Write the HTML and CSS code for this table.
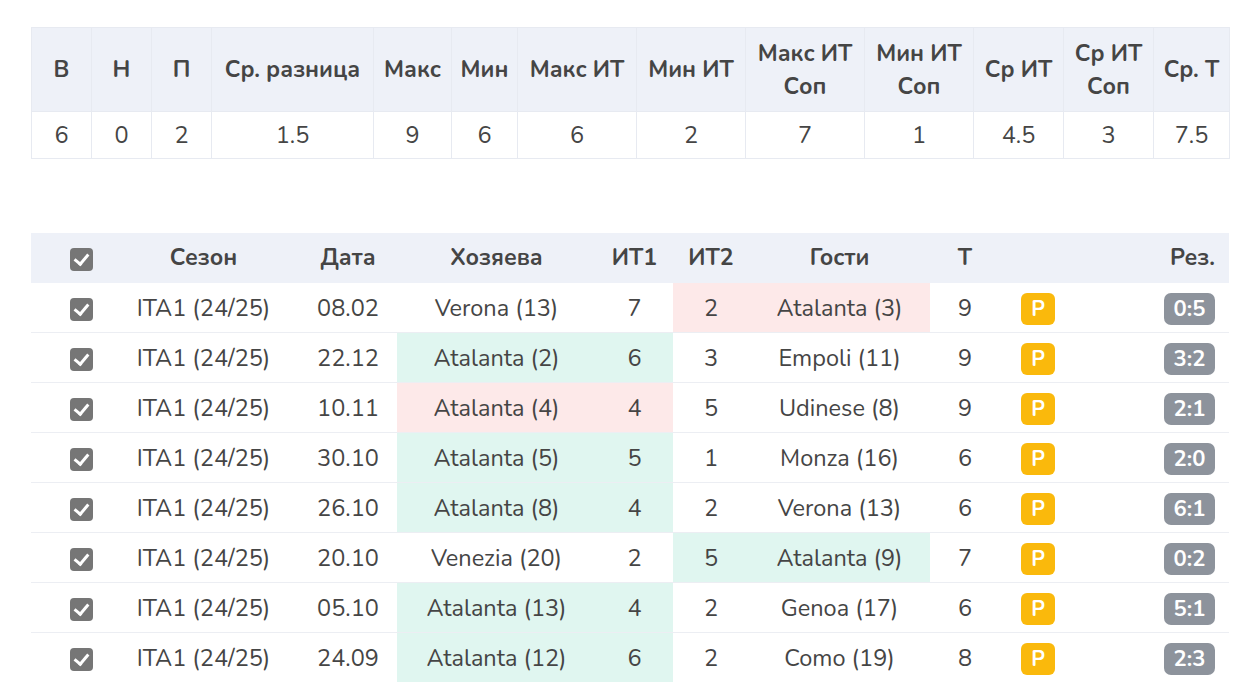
FILE: index.html
```html
<!DOCTYPE html>
<html lang="ru">
<head>
<meta charset="utf-8">
<title>Stats</title>
<link rel="stylesheet" href="styles.css">
</head>
<body>
<div class="page">
  <table class="summary">
    <colgroup>
      <col style="width:60px"><col style="width:60px"><col style="width:60px"><col style="width:162px"><col style="width:78px"><col style="width:66px"><col style="width:119px"><col style="width:109px"><col style="width:119px"><col style="width:109px"><col style="width:90px"><col style="width:90px"><col style="width:76px">
    </colgroup>
    <thead>
      <tr>
        <th>В</th><th>Н</th><th>П</th><th>Ср. разница</th><th>Макс</th><th>Мин</th><th>Макс ИТ</th><th>Мин ИТ</th><th>Макс ИТ<br>Соп</th><th>Мин ИТ<br>Соп</th><th>Ср ИТ</th><th>Ср ИТ<br>Соп</th><th>Ср. Т</th>
      </tr>
    </thead>
    <tbody>
      <tr>
        <td>6</td><td>0</td><td>2</td><td>1.5</td><td>9</td><td>6</td><td>6</td><td>2</td><td>7</td><td>1</td><td>4.5</td><td>3</td><td>7.5</td>
      </tr>
    </tbody>
  </table>

  <table class="matches">
    <colgroup>
      <col style="width:100px"><col style="width:145px"><col style="width:121px"><col style="width:199px"><col style="width:77px"><col style="width:76px"><col style="width:181px"><col style="width:70px"><col style="width:110px"><col style="width:119px">
    </colgroup>
    <thead>
      <tr>
        <th><span class="cb"></span></th><th>Сезон</th><th class="date">Дата</th><th>Хозяева</th><th>ИТ1</th><th>ИТ2</th><th>Гости</th><th>Т</th><th></th><th class="res">Рез.</th>
      </tr>
    </thead>
    <tbody>
      <tr><td><span class="cb"></span></td><td>ITA1 (24/25)</td><td class="date">08.02</td><td>Verona (13)</td><td>7</td><td class="lose">2</td><td class="lose">Atalanta (3)</td><td>9</td><td class="bcell"><span class="pb">P</span></td><td class="res"><span class="score">0:5</span></td></tr>
      <tr><td><span class="cb"></span></td><td>ITA1 (24/25)</td><td class="date">22.12</td><td class="win">Atalanta (2)</td><td class="win">6</td><td>3</td><td>Empoli (11)</td><td>9</td><td class="bcell"><span class="pb">P</span></td><td class="res"><span class="score">3:2</span></td></tr>
      <tr><td><span class="cb"></span></td><td>ITA1 (24/25)</td><td class="date">10.11</td><td class="lose">Atalanta (4)</td><td class="lose">4</td><td>5</td><td>Udinese (8)</td><td>9</td><td class="bcell"><span class="pb">P</span></td><td class="res"><span class="score">2:1</span></td></tr>
      <tr><td><span class="cb"></span></td><td>ITA1 (24/25)</td><td class="date">30.10</td><td class="win">Atalanta (5)</td><td class="win">5</td><td>1</td><td>Monza (16)</td><td>6</td><td class="bcell"><span class="pb">P</span></td><td class="res"><span class="score">2:0</span></td></tr>
      <tr><td><span class="cb"></span></td><td>ITA1 (24/25)</td><td class="date">26.10</td><td class="win">Atalanta (8)</td><td class="win">4</td><td>2</td><td>Verona (13)</td><td>6</td><td class="bcell"><span class="pb">P</span></td><td class="res"><span class="score">6:1</span></td></tr>
      <tr><td><span class="cb"></span></td><td>ITA1 (24/25)</td><td class="date">20.10</td><td>Venezia (20)</td><td>2</td><td class="win">5</td><td class="win">Atalanta (9)</td><td>7</td><td class="bcell"><span class="pb">P</span></td><td class="res"><span class="score">0:2</span></td></tr>
      <tr><td><span class="cb"></span></td><td>ITA1 (24/25)</td><td class="date">05.10</td><td class="win">Atalanta (13)</td><td class="win">4</td><td>2</td><td>Genoa (17)</td><td>6</td><td class="bcell"><span class="pb">P</span></td><td class="res"><span class="score">5:1</span></td></tr>
      <tr><td><span class="cb"></span></td><td>ITA1 (24/25)</td><td class="date">24.09</td><td class="win">Atalanta (12)</td><td class="win">6</td><td>2</td><td>Como (19)</td><td>8</td><td class="bcell"><span class="pb">P</span></td><td class="res"><span class="score">2:3</span></td></tr>
    </tbody>
  </table>
</div>
</body>
</html>
```

FILE: styles.css
```css
html, body {
  margin: 0;
  padding: 0;
  background: #ffffff;
}
body {
  font-family: "Nunito", "Lato", "Noto Sans", sans-serif;
  color: #454545;
}
.page {
  padding: 27px 11px 0 31px;
}
table {
  border-collapse: collapse;
  table-layout: fixed;
  width: 1198px;
}
.summary th,
.summary td {
  border: 1px solid #e7eaf1;
  text-align: center;
  padding: 0;
}
.summary th {
  background: #eef1f8;
  font-weight: 700;
  font-size: 23px;
  height: 83px;
  line-height: 33px;
  color: #454545;
}
.summary td {
  height: 46px;
  font-weight: 400;
  font-size: 23.5px;
}
.matches {
  margin-top: 74px;
}
.matches th,
.matches td {
  text-align: center;
  font-size: 23.5px;
  padding: 0;
  height: 49px;
  border-bottom: 1px solid #eceef3;
}
.matches th {
  background: #eef1f8;
  font-weight: 700;
  font-size: 23px;
  border-bottom: 1px solid #eef1f8;
}
.matches .date {
  padding-left: 23px;
}
.matches tbody tr:last-child td {
  border-bottom: none;
}
.matches td.win {
  background: #e0f6f0;
}
.matches td.lose {
  background: #fde9e9;
}
.matches .bcell {
  text-align: left;
  padding-left: 21px;
}
.matches .res {
  text-align: right;
  padding-right: 14px;
}
.cb {
  display: inline-block;
  width: 23px;
  height: 23px;
  border-radius: 4px;
  background: #767676;
  vertical-align: middle;
  position: relative;
}
.cb::after {
  content: "";
  position: absolute;
  left: 7px;
  top: 3px;
  width: 6px;
  height: 11px;
  border-right: 3px solid #fff;
  border-bottom: 3px solid #fff;
  transform: rotate(40deg);
}
.pb {
  display: inline-block;
  width: 34px;
  height: 32px;
  line-height: 32px;
  border-radius: 6px;
  background: #fab90c;
  color: #fff;
  font-weight: 700;
  font-size: 21px;
  text-align: center;
  vertical-align: middle;
}
.score {
  display: inline-block;
  width: 51px;
  height: 32px;
  line-height: 32px;
  border-radius: 7px;
  background: #8d939c;
  color: #fff;
  font-weight: 700;
  font-size: 22px;
  text-align: center;
  vertical-align: middle;
}
```
